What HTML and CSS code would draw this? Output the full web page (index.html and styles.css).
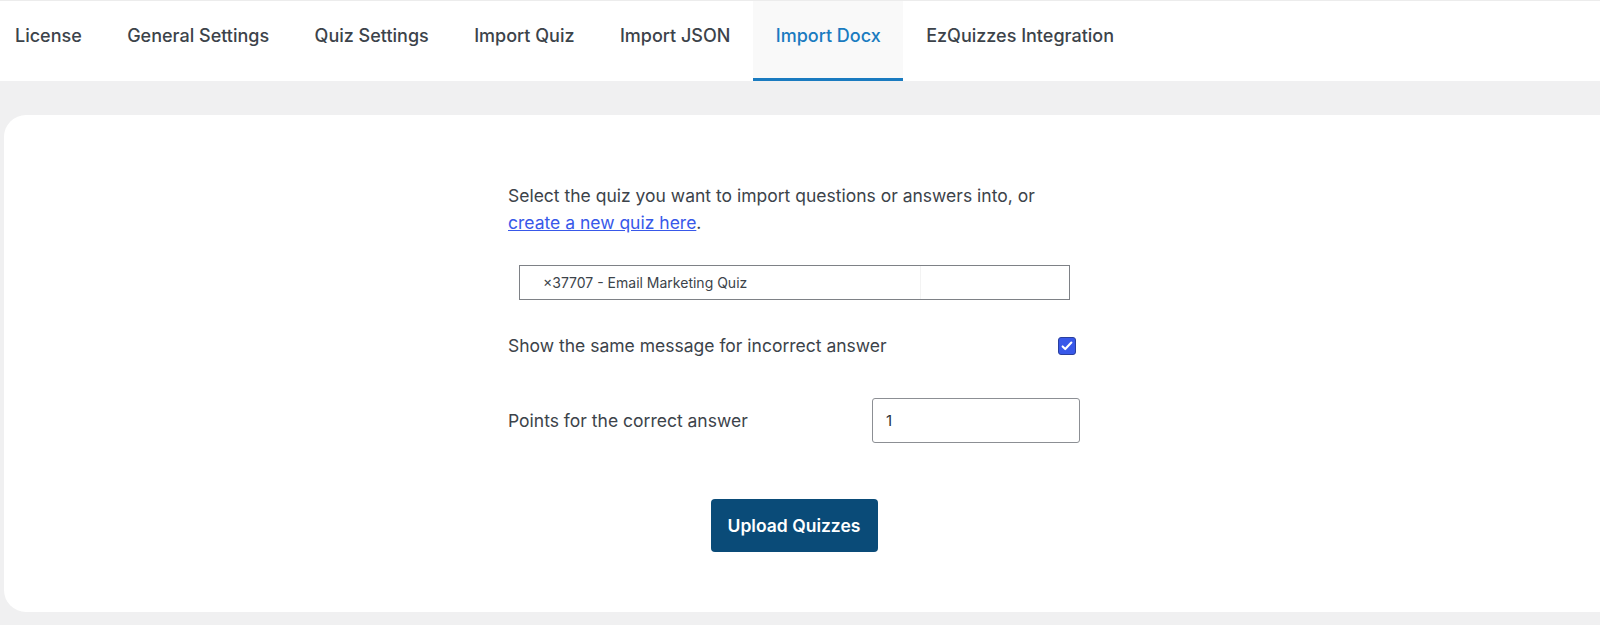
FILE: index.html
```html
<!DOCTYPE html>
<html lang="en">
<head>
    <meta charset="UTF-8">
    <title>Import Docx</title>
    <link rel="stylesheet" href="styles.css">
</head>
<body>
    <nav class="tabs">
        <a class="tab" href="#">License</a>
        <a class="tab" href="#">General Settings</a>
        <a class="tab" href="#">Quiz Settings</a>
        <a class="tab" href="#">Import Quiz</a>
        <a class="tab" href="#">Import JSON</a>
        <a class="tab active" href="#">Import Docx</a>
        <a class="tab" href="#">EzQuizzes Integration</a>
    </nav>

    <div class="card">
        <div class="import-form">
            <p class="intro">
                Select the quiz you want to import questions or answers into, or
                <a href="#">create a new quiz here</a>.
            </p>

            <div class="quiz-select">
                <span class="quiz-select-value">×37707 - Email Marketing Quiz</span>
                <span class="quiz-select-rest"></span>
            </div>

            <div class="form-row check-row">
                <label for="same-msg">Show the same message for incorrect answer</label>
                <span class="checkbox" id="same-msg">
                    <svg viewBox="0 0 16 16" width="14" height="14">
                        <path d="M3 8.5l3 3 7-7.5" fill="none" stroke="#fff" stroke-width="2.4" stroke-linecap="round" stroke-linejoin="round"/>
                    </svg>
                </span>
            </div>

            <div class="form-row points-row">
                <label for="points">Points for the correct answer</label>
                <input type="text" id="points" value="1">
            </div>

            <div class="actions">
                <button class="upload-button">Upload Quizzes</button>
            </div>
        </div>
    </div>
</body>
</html>
```

FILE: styles.css
```css
/* Umumiy */
body {
    margin: 0;
    font-family: Inter, "Noto Sans", sans-serif;
    background-color: #f0f0f1;
    color: #3c434a;
    height: 625px;
    overflow: hidden;
}

/* Tablar */
.tabs {
    display: flex;
    height: 80px;
    background-color: #fff;
    border-top: 1px solid #ececec;
}

.tab {
    display: flex;
    align-items: center;
    padding: 0 22.7px 8px;
    font-size: 18px;
    font-weight: 500;
    color: #3c434a;
    text-decoration: none;
    border-bottom: 3px solid transparent;
}

.tab:first-child {
    padding-left: 15px;
}

.tab.active {
    color: #1a7bc0;
    background-color: #f9f9f9;
    border-bottom-color: #1a7bc0;
}

/* Karta */
.card {
    display: flex;
    justify-content: center;
    margin: 34px 0 0 4px;
    padding: 67px 16px 0 0;
    height: 430px;
    background-color: #fff;
    border-radius: 22px 0 0 22px;
}

.import-form {
    width: 572px;
}

.intro {
    margin: 0;
    font-size: 17.5px;
    line-height: 27px;
}

.intro a {
    color: #3858e9;
}

.quiz-select {
    display: flex;
    height: 33px;
    margin: 29px 10px 0 11px;
    border: 1px solid #7e8186;
    font-size: 14px;
}

.quiz-select-value {
    display: flex;
    align-items: center;
    width: 377px;
    padding-left: 23px;
    border-right: 1px solid #f3f3f3;
}

.form-row {
    display: flex;
    align-items: center;
    justify-content: space-between;
    font-size: 17.5px;
}

.check-row {
    margin-top: 35px;
    padding-right: 4px;
}

.checkbox {
    display: flex;
    align-items: center;
    justify-content: center;
    width: 16px;
    height: 16px;
    background-color: #3858e9;
    border: 1px solid #2a3f9e;
    border-radius: 3px;
}

.points-row {
    margin-top: 42px;
}

.points-row input {
    width: 208px;
    height: 45px;
    box-sizing: border-box;
    padding: 0 13px;
    border: 1px solid #8c8f94;
    border-radius: 3px;
    font-family: inherit;
    font-size: 15px;
    color: #2c3338;
}

/* Tugma */
.actions {
    display: flex;
    justify-content: center;
    margin-top: 56px;
}

.upload-button {
    width: 167px;
    height: 53px;
    background-color: #0a4b78;
    border: none;
    border-radius: 4px;
    color: #fff;
    font-family: inherit;
    font-size: 17.5px;
    font-weight: 600;
    cursor: pointer;
}
```
